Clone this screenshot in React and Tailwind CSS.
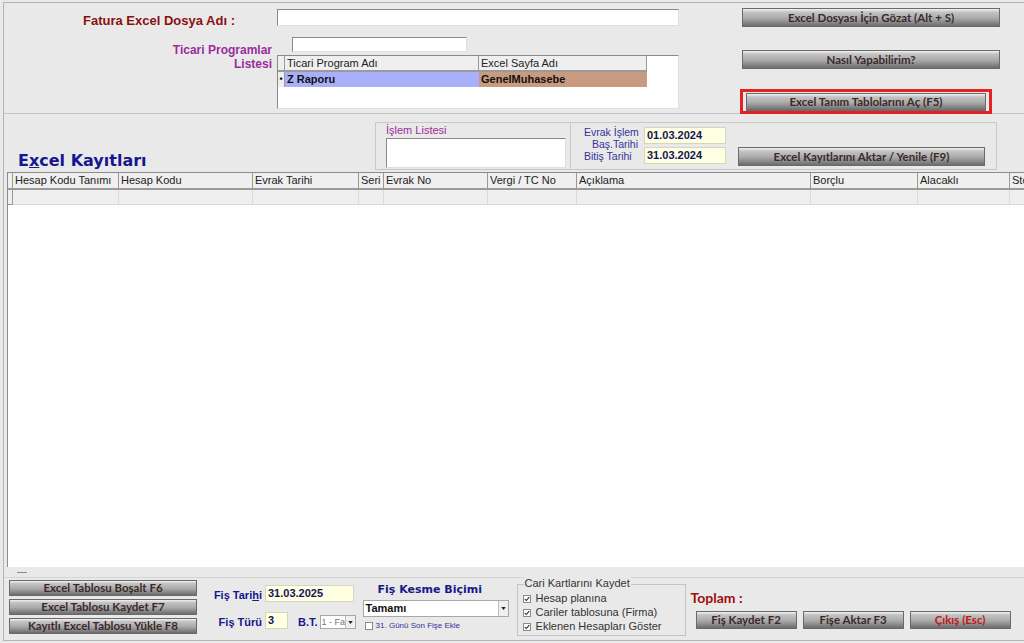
import React from 'react';

const FONT = { fontFamily: '"Liberation Sans", Arial, sans-serif' };
const BTN_FONT = { fontFamily: 'Lato, "Liberation Sans", sans-serif' };

// Windows-ish gradient button
const GrayButton = ({ children, className = '', red = false }) => (
  <div
    style={BTN_FONT}
    className={`flex items-center justify-center whitespace-nowrap border border-[#6a6a6a] bg-[linear-gradient(to_bottom,#f2f2f2_0%,#c4c4c4_18%,#a9a9a9_55%,#6c6c6c_100%)] text-[11.5px] font-bold leading-none ${red ? 'text-[#c01818]' : 'text-[#3a2a2a]'} ${className}`}
  >
    {children}
  </div>
);

const Check = ({ checked = true }) => (
  <span className="inline-flex h-[8px] w-[8px] items-center justify-center border border-[#8a8a8a] bg-white">
    {checked && (
      <svg viewBox="0 0 8 8" className="h-[6px] w-[6px]">
        <path d="M1 4 L3 6 L7 1.5" stroke="#222" strokeWidth="1.4" fill="none" />
      </svg>
    )}
  </span>
);

const DropArrow = () => (
  <span className="flex h-full w-[10px] items-center justify-center border-l border-[#bdbdbd] bg-[#f0f0f0]">
    <svg viewBox="0 0 6 4" className="h-[3px] w-[5px]">
      <path d="M0 0 L6 0 L3 4 Z" fill="#222" />
    </svg>
  </span>
);

const gridCols = [
  { w: 106, t: 'Hesap Kodu Tanımı' },
  { w: 134, t: 'Hesap Kodu' },
  { w: 106, t: 'Evrak Tarihi' },
  { w: 25, t: 'Seri' },
  { w: 104, t: 'Evrak No' },
  { w: 89, t: 'Vergi / TC No' },
  { w: 234, t: 'Açıklama' },
  { w: 107, t: 'Borçlu' },
  { w: 92, t: 'Alacaklı' },
  { w: 60, t: 'Stok' },
];

const sunken = 'border border-t-[#8a8a8a] border-l-[#8a8a8a] border-r-[#e0e0e0] border-b-[#e0e0e0] bg-white';
const yellowBox = 'border border-[#d6d6c0] bg-[#ffffe1] pl-[2px] font-bold leading-[15px] text-[#14145a]';

const App = () => {
  return (
    <div style={FONT} className="h-[643px] w-[1024px] overflow-hidden bg-[#e9e9e9] pt-[2px] pl-[3px]">
      <div className="flex h-[639px] flex-col border-l border-t border-b border-[#b4b4b4]">
        {/* TOP: file + programs */}
        <div className="flex h-[111px] shrink-0 border-b border-[#c4c4c4]">
          <div className="w-[273px] shrink-0">
            <div className="pl-[79px] pt-[8px] text-[13px] font-bold text-[#8b0f0f]">Fatura Excel Dosya Adı :</div>
            <div className="mt-[12px] pr-[5px] text-right text-[12px] font-bold leading-[14px] text-[#9a2d9a]">
              Ticari Programlar
              <br />
              Listesi
            </div>
          </div>
          <div className="w-[402px] shrink-0">
            <div className={`mt-[6px] h-[17px] ${sunken}`} />
            <div className={`ml-[15px] mt-[11px] h-[15px] w-[175px] ${sunken}`} />
            <div className={`mt-[3px] h-[54px] ${sunken}`}>
              <div className="flex h-[16px] text-[11px] text-[#222]">
                <div className="w-[7px] border-r border-b-2 border-[#9a9a9a] bg-[#efefef]" />
                <div className="w-[194px] border-r border-b-2 border-[#9a9a9a] bg-[#efefef] pl-[2px] leading-[15px]">Ticari Program Adı</div>
                <div className="w-[168px] border-r border-b-2 border-[#9a9a9a] bg-[#efefef] pl-[2px] leading-[15px]">Excel Sayfa Adı</div>
              </div>
              <div className="flex h-[15px] text-[11px] font-bold text-[#111]">
                <div className="flex w-[7px] items-center justify-center border-r border-[#9a9a9a] bg-[#efefef] text-[9px]">•</div>
                <div className="w-[194px] bg-[#a9b0fa] pl-[2px] leading-[15px]">Z Raporu</div>
                <div className="w-[168px] bg-[#c89a80] pl-[2px] leading-[15px]">GenelMuhasebe</div>
              </div>
            </div>
          </div>
          <div className="ml-[61px] w-[262px] shrink-0">
            <GrayButton className="ml-[2px] mt-[5px] h-[19px] w-[258px]">Excel Dosyası İçin Gözat (Alt + S)</GrayButton>
            <GrayButton className="ml-[2px] mt-[23px] h-[19px] w-[258px]">Nasıl Yapabilirim?</GrayButton>
            <div className="mt-[20px] h-[25px] w-[252px] border-[3px] border-[#e42222] px-[3px] pt-[1px]">
              <GrayButton className="h-[18px] w-[240px]">Excel Tanım Tablolarını Aç (F5)</GrayButton>
            </div>
          </div>
        </div>

        {/* MIDDLE: header band */}
        <div className="flex h-[58px] shrink-0">
          <div className="flex w-[371px] shrink-0 items-end pb-[1px] pl-[14px]">
            <div className="text-[16px] font-bold leading-[20px] text-[#17178e]" style={{ fontFamily: '"DejaVu Sans", sans-serif' }}>
              E<u>x</u>cel Kayıtları
            </div>
          </div>
          <div className="mt-[8px] flex h-[48px] border border-[#c8c8c8]">
            <div className="w-[195px] border-r border-[#c8c8c8] pl-[10px] pt-[1px]">
              <div className="text-[11px] leading-[12px] text-[#9a2d9a]">İşlem Listesi</div>
              <div className={`mt-[2px] h-[30px] w-[180px] ${sunken}`} />
            </div>
            <div className="flex w-[425px]">
              <div className="ml-[13px] mt-[3px] w-[54px] whitespace-nowrap text-right text-[10.5px] leading-[12px] text-[#33339a]">
                <div className="text-left">Evrak İşlem</div>
                <div>Baş.Tarihi</div>
                <div className="text-left">Bitiş Tarihi</div>
              </div>
              <div className="ml-[6px] mt-[4px] flex flex-col gap-[3px] text-[11px]">
                <div className={`h-[17px] w-[82px] ${yellowBox}`}>01.03.2024</div>
                <div className={`h-[17px] w-[82px] ${yellowBox}`}>31.03.2024</div>
              </div>
              <GrayButton className="ml-[12px] mt-[24px] h-[19px] w-[247px]">Excel Kayıtlarını Aktar / Yenile (F9)</GrayButton>
            </div>
          </div>
        </div>

        {/* DATA GRID */}
        <div className="ml-[3px] flex h-[395px] shrink-0 flex-col border-l border-t border-[#8c8c8c] bg-white">
          <div className="flex h-[17px] shrink-0 text-[11px] text-[#222]">
            <div className="w-[5px] shrink-0 border-r border-b-2 border-[#9a9a9a] bg-[#efefef]" />
            {gridCols.map((c) => (
              <div
                key={c.t}
                style={{ width: c.w }}
                className="shrink-0 overflow-hidden whitespace-nowrap border-r border-b-2 border-[#9a9a9a] bg-[#efefef] pl-[2px] leading-[15px]"
              >
                {c.t}
              </div>
            ))}
          </div>
          <div className="flex h-[15px] shrink-0">
            <div className="w-[5px] shrink-0 border-r border-b border-[#9a9a9a] bg-[#efefef]" />
            {gridCols.map((c) => (
              <div key={c.t} style={{ width: c.w }} className="shrink-0 border-r border-b border-[#dadada] bg-[#efefef]" />
            ))}
          </div>
          <div className="flex-1" />
        </div>
        <div className="flex h-[10px] shrink-0 items-center pl-[13px]">
          <div className="h-[1px] w-[10px] bg-[#8a8a8a]" />
        </div>

        {/* BOTTOM BAR */}
        <div className="flex flex-1 border-t border-[#d4d4d4]">
          <div className="ml-[5px] mt-[2px] flex flex-col gap-[3px]">
            <GrayButton className="h-[16px] w-[188px]">Excel Tablosu Boşalt F6</GrayButton>
            <GrayButton className="h-[16px] w-[188px]">Excel Tablosu Kaydet F7</GrayButton>
            <GrayButton className="h-[16px] w-[188px]">Kayıtlı Excel Tablosu Yükle F8</GrayButton>
          </div>

          <div className="ml-[14px] mt-[7px] flex flex-col whitespace-nowrap text-[11px] font-bold text-[#17178e]">
            <div className="flex items-end">
              <span className="w-[51px] text-right leading-[14px]">Fiş Tari<u>h</u>i</span>
              <div className={`ml-[3px] h-[17px] w-[89px] ${yellowBox}`}>31.03.2025</div>
            </div>
            <div className="mt-[10px] flex items-end">
              <span className="w-[51px] text-right leading-[14px]">Fiş Türü</span>
              <div className={`ml-[3px] h-[17px] w-[23px] ${yellowBox}`}>3</div>
              <span className="ml-[10px] leading-[14px]">B.T.</span>
              <div className="ml-[2px] flex h-[14px] w-[36px] items-center border border-[#a8a8a8] bg-white text-[9px] font-normal text-[#777]">
                <span className="flex-1 pl-[1px] leading-none">1 - Fa</span>
                <DropArrow />
              </div>
            </div>
          </div>

          <div className="ml-[7px] mt-[5px] w-[146px]">
            <div className="pl-[15px] text-[11px] font-bold leading-[14px] text-[#17178e]" style={{ fontFamily: '"DejaVu Sans", sans-serif' }}>Fiş Kesme Biçimi</div>
            <div className="mt-[3px] flex h-[17px] items-center border border-[#a8a8a8] bg-white">
              <span className="flex-1 pl-[2px] text-[11px] font-bold text-[#111]">Tamamı</span>
              <DropArrow />
            </div>
            <div className="mt-[3px] flex items-center gap-[3px] pl-[2px]">
              <Check checked={false} />
              <span className="whitespace-nowrap text-[8px] text-[#33339a]">31. Günü Son Fişe Ekle</span>
            </div>
          </div>

          <div className="relative ml-[8px] mt-[6px] h-[52px] w-[169px] border border-[#c4c4c4] pl-[5px] pt-[7px] text-[11px] leading-[13px] text-[#333]">
            <span className="absolute left-[6px] top-[-8px] bg-[#e9e9e9] px-[1px]">Cari Kartlarını Kaydet</span>
            <div className="flex items-center gap-[5px]"><Check /> Hesap planına</div>
            <div className="mt-[1px] flex items-center gap-[5px]"><Check /> Cariler tablosuna (Firma)</div>
            <div className="mt-[1px] flex items-center gap-[5px]"><Check /> Eklenen Hesapları Göster</div>
          </div>

          <div className="ml-[5px] mt-[12px]">
            <div className="text-[14px] font-bold leading-[16px] text-[#a00d0d]" style={BTN_FONT}>Toplam :</div>
            <div className="ml-[5px] mt-[5px] flex gap-[6px]">
              <GrayButton className="h-[18px] w-[101px]">Fiş Kaydet F2</GrayButton>
              <GrayButton className="h-[18px] w-[101px]">Fişe Aktar F3</GrayButton>
              <GrayButton red className="h-[18px] w-[101px]">Çıkış (Esc)</GrayButton>
            </div>
          </div>
        </div>
      </div>
    </div>
  );
};

export default App;
